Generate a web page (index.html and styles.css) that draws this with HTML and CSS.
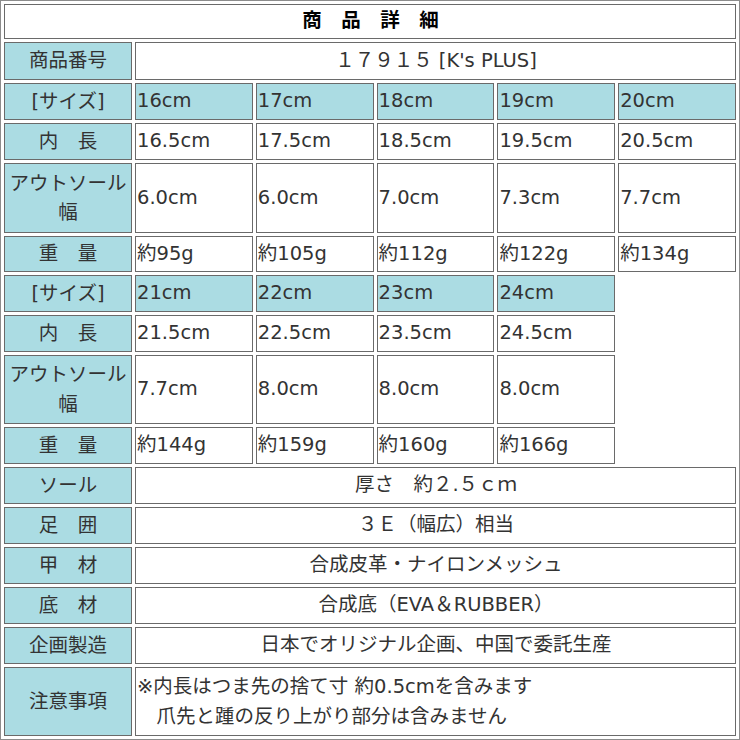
FILE: index.html
```html
<!DOCTYPE html>
<html lang="ja">
<head>
<meta charset="utf-8">
<link rel="stylesheet" href="styles.css">
</head>
<body>
<table class="spec">
  <colgroup>
    <col class="c-lbl"><col class="c-d"><col class="c-d"><col class="c-d"><col class="c-d"><col class="c-d">
  </colgroup>
  <tr class="h35"><th colspan="6" class="title">商　品　詳　細</th></tr>
  <tr class="h38"><td class="lbl">商品番号</td><td colspan="5" class="center">１７９１５ [K's PLUS]</td></tr>
  <tr><td class="lbl">[サイズ]</td><td class="sz">16cm</td><td class="sz">17cm</td><td class="sz">18cm</td><td class="sz">19cm</td><td class="sz">20cm</td></tr>
  <tr><td class="lbl">内　長</td><td>16.5cm</td><td>17.5cm</td><td>18.5cm</td><td>19.5cm</td><td>20.5cm</td></tr>
  <tr class="h70"><td class="lbl">アウトソール幅</td><td>6.0cm</td><td>6.0cm</td><td>7.0cm</td><td>7.3cm</td><td>7.7cm</td></tr>
  <tr class="h36"><td class="lbl">重　量</td><td>約95g</td><td>約105g</td><td>約112g</td><td>約122g</td><td>約134g</td></tr>
  <tr><td class="lbl">[サイズ]</td><td class="sz">21cm</td><td class="sz">22cm</td><td class="sz">23cm</td><td class="sz">24cm</td></tr>
  <tr><td class="lbl">内　長</td><td>21.5cm</td><td>22.5cm</td><td>23.5cm</td><td>24.5cm</td></tr>
  <tr class="h69"><td class="lbl">アウトソール幅</td><td>7.7cm</td><td>8.0cm</td><td>8.0cm</td><td>8.0cm</td></tr>
  <tr><td class="lbl">重　量</td><td>約144g</td><td>約159g</td><td>約160g</td><td>約166g</td></tr>
  <tr><td class="lbl">ソール</td><td colspan="5" class="center">厚さ　約２.５ｃｍ</td></tr>
  <tr><td class="lbl">足　囲</td><td colspan="5" class="center">３Ｅ（幅広）相当</td></tr>
  <tr><td class="lbl">甲　材</td><td colspan="5" class="center">合成皮革・ナイロンメッシュ</td></tr>
  <tr><td class="lbl">底　材</td><td colspan="5" class="center">合成底（EVA＆RUBBER）</td></tr>
  <tr><td class="lbl">企画製造</td><td colspan="5" class="center">日本でオリジナル企画、中国で委託生産</td></tr>
  <tr class="h69"><td class="lbl">注意事項</td><td colspan="5" class="note">※内長はつま先の捨て寸 約0.5cmを含みます<br>　爪先と踵の反り上がり部分は含みません</td></tr>
</table>
</body>
</html>
```
FILE: styles.css
```css
html, body {
  margin: 0;
  padding: 0;
  background: #fff;
}
.spec {
  width: 740px;
  table-layout: fixed;
  border-collapse: separate;
  border-spacing: 3px;
  border: 1px solid #8c8c8c;
  font-family: "DejaVu Sans", "Noto Sans CJK JP", sans-serif;
  font-size: 19.5px;
  color: #333;
}
.c-lbl { width: 128px; }
.spec tr { height: 37px; }
.spec tr.h35 { height: 35px; }
.spec tr.h36 { height: 36px; }
.spec tr.h38 { height: 38px; }
.spec tr.h69 { height: 69px; }
.spec tr.h70 { height: 70px; }
.spec th,
.spec td {
  border: 1px solid #6a6a6a;
  padding: 0 0 0 1px;
  text-align: left;
  vertical-align: middle;
  line-height: 1.45;
  white-space: normal;
  background: #fff;
}
.spec th.title {
  text-align: center;
  font-weight: bold;
  color: #000;
}
.spec td.lbl {
  background: #abdce3;
  text-align: center;
  padding: 0;
  line-height: 1.5;
}
.spec td.sz {
  background: #abdce3;
}
.spec td.center {
  text-align: center;
}
.spec td.note {
  line-height: 1.5;
}
```
